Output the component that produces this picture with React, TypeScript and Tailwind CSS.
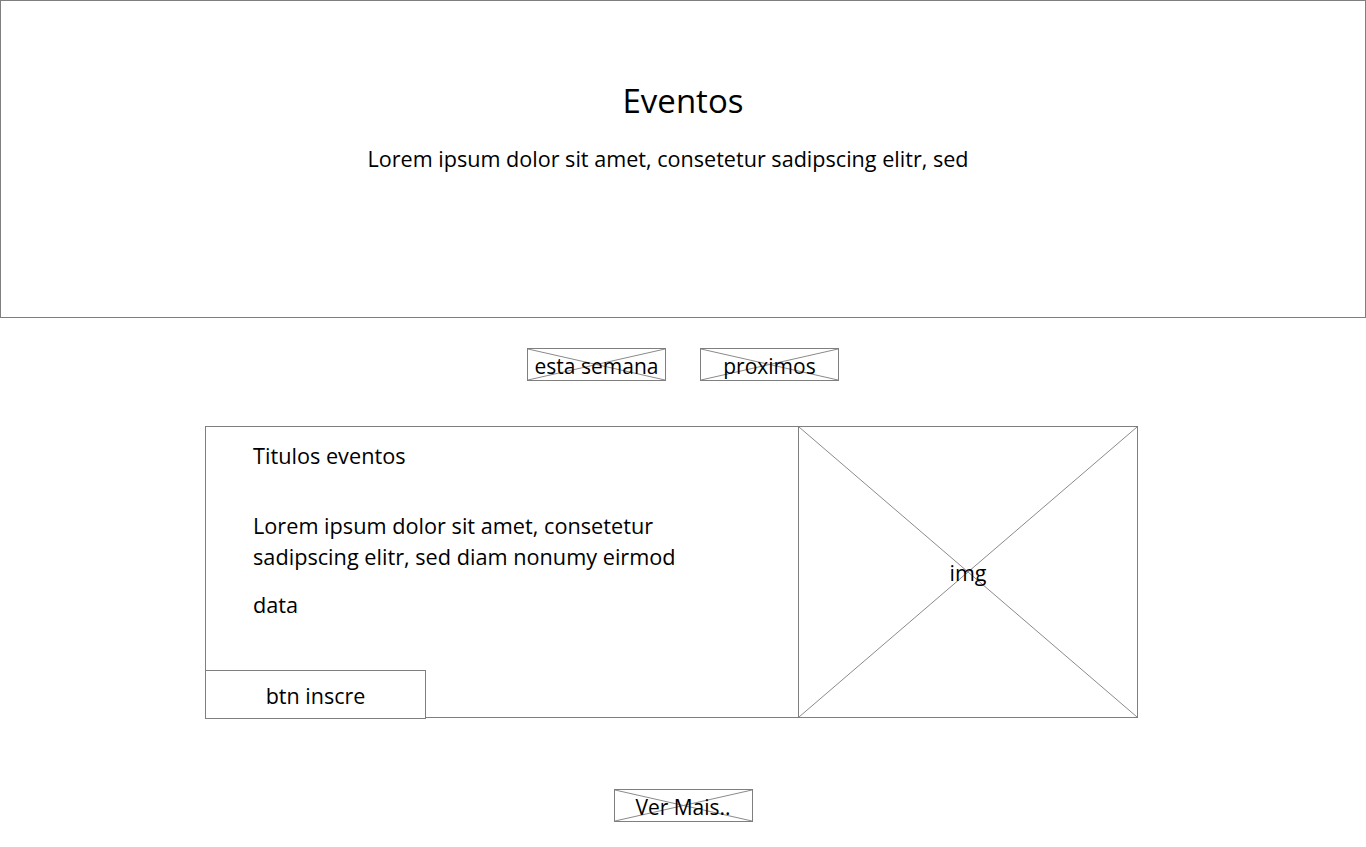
import React from "react";

function Cross({ className = "" }: { className?: string }) {
  return (
    <svg className={"pointer-events-none absolute inset-0 h-full w-full " + className} preserveAspectRatio="none" viewBox="0 0 100 100">
      <line x1="0" y1="0" x2="100" y2="100" stroke="#8a8a8a" strokeWidth="1" vectorEffect="non-scaling-stroke" />
      <line x1="100" y1="0" x2="0" y2="100" stroke="#8a8a8a" strokeWidth="1" vectorEffect="non-scaling-stroke" />
    </svg>
  );
}

function XButton({ label }: { label: string }) {
  return (
    <div className="relative flex h-[33px] w-[139px] items-center justify-center border border-[#7f7f7f] pt-[4px] text-[21px] leading-none text-black">
      <Cross />
      <span className="relative">{label}</span>
    </div>
  );
}

export default function App() {
  return (
    <div className="h-[847px] w-[1366px] overflow-hidden bg-white text-black" style={{ fontFamily: '"Open Sans", "Noto Sans", sans-serif' }}>
      <header className="flex h-[318px] flex-col items-center border border-[#7f7f7f] pt-[78px]">
        <h1 className="text-[33px] leading-[44px] font-normal">Eventos</h1>
        <p className="mr-[30px] mt-[22px] text-[21.6px] leading-[28px]">Lorem ipsum dolor sit amet, consetetur sadipscing elitr, sed</p>
      </header>

      <div className="mt-[30px] flex justify-center gap-[34px]">
        <XButton label="esta semana" />
        <XButton label="proximos" />
      </div>

      <div className="ml-[205px] mt-[45px] flex h-[292px] w-[933px]">
        <div className="flex w-[593px] flex-col border-y border-l border-[#7f7f7f]">
          <div className="pl-[47px] pt-[15px] text-[21.7px] leading-[28px]">
            <div>Titulos eventos</div>
            <p className="mt-[40px] leading-[31px]">
              Lorem ipsum dolor sit amet, consetetur
              <br />
              sadipscing elitr, sed diam nonumy eirmod
            </p>
            <div className="mt-[19px]">data</div>
          </div>
          <button className="mt-auto -mb-[2px] -ml-[1px] flex h-[49px] w-[221px] items-center justify-center border border-[#7f7f7f] bg-white pt-[4px] text-[21.5px]">
            btn inscre
          </button>
        </div>
        <div className="relative flex w-[340px] items-center justify-center border border-[#7f7f7f] pt-[2px] text-[21.5px]">
          <Cross />
          <span className="relative">img</span>
        </div>
      </div>

      <div className="mt-[71px] flex justify-center">
        <XButton label="Ver Mais.." />
      </div>
    </div>
  );
}
